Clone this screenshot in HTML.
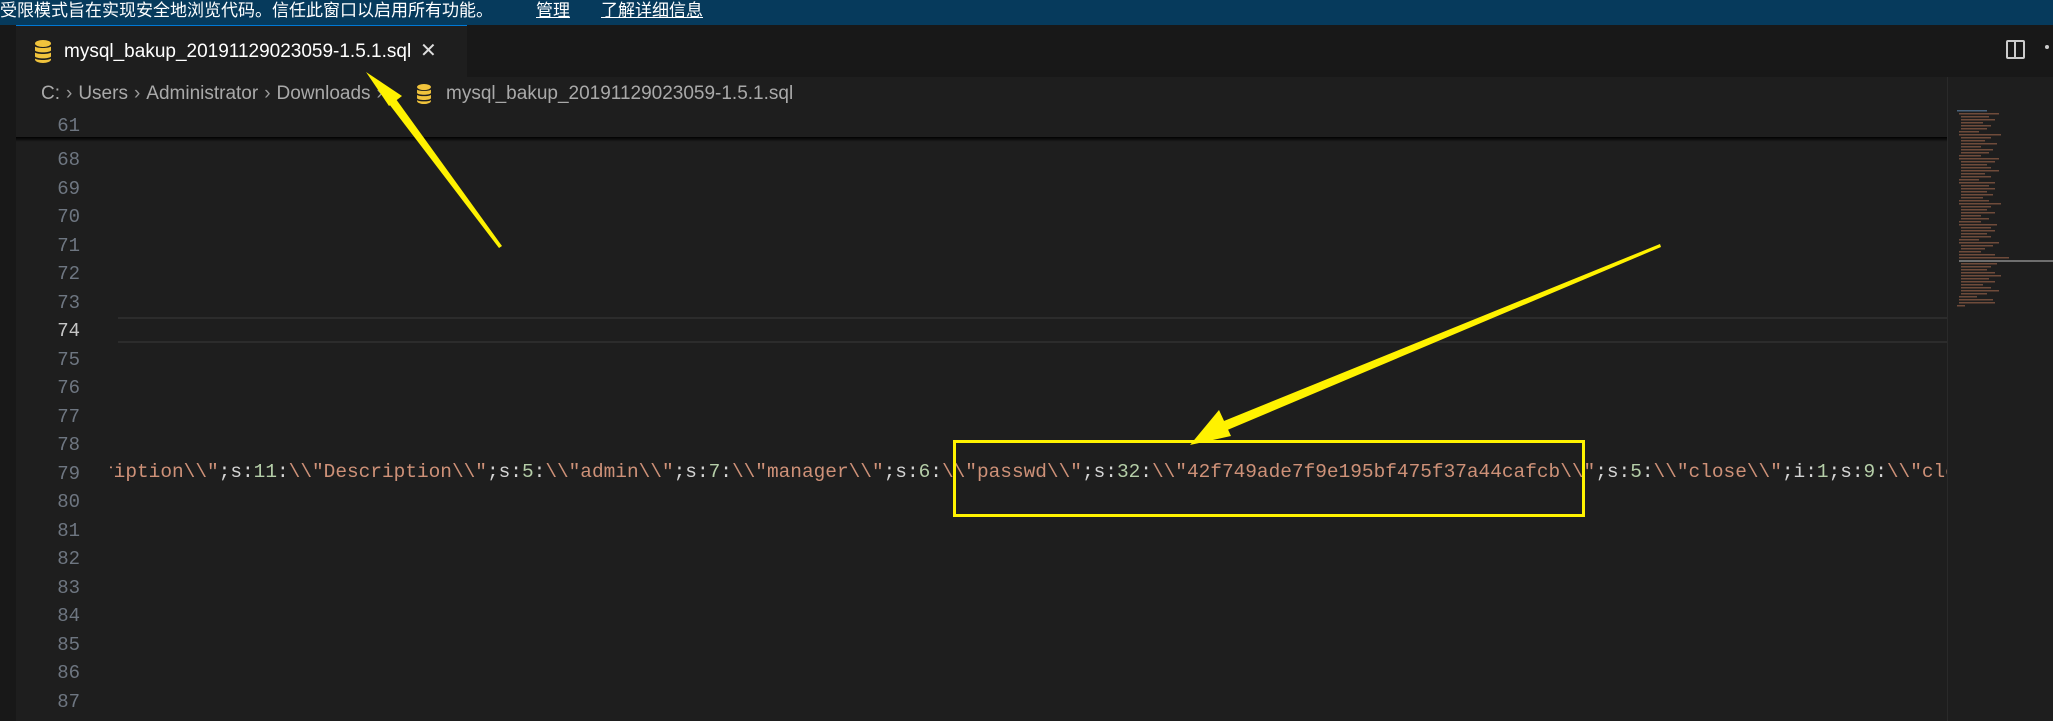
<!DOCTYPE html>
<html><head><meta charset="utf-8"><style>
*{margin:0;padding:0;box-sizing:border-box}
body{width:2053px;height:721px;background:#1e1e1e;position:relative;overflow:hidden;font-family:"Liberation Sans","Noto Sans CJK SC",sans-serif}
.abs{position:absolute}
.ln{position:absolute;left:30px;width:50px;text-align:right;font-family:"Liberation Mono",monospace;font-size:19px;color:#6e7681;line-height:28px}
.code{font-family:"Liberation Mono",monospace;font-size:19.45px;white-space:pre;color:#d4d4d4;letter-spacing:0}
.s{color:#ce9178}.n{color:#b5cea8}
.ch{color:#9a9a9a;margin:0 6px}
</style></head><body>
<div class="abs" style="left:0;top:0;width:2053px;height:25px;background:#063a5c;color:#fff;font-size:17px;line-height:22px;white-space:nowrap">受限模式旨在实现安全地浏览代码。信任此窗口以启用所有功能。<span class="abs" style="left:536px;top:0"><u>管理</u></span><span class="abs" style="left:601px;top:0"><u>了解详细信息</u></span></div>
<div class="abs" style="left:0;top:25px;width:2053px;height:52px;background:#181818"></div>
<div class="abs" style="left:0;top:77px;width:16px;height:644px;background:#181818"></div>
<div class="abs" style="left:16px;top:25px;width:451px;height:52px;background:#1e1e1e;border-top:1px solid #0078d4"></div>
<svg class="abs" style="left:34px;top:40px" width="18" height="23" viewBox="0 0 18 23"><g fill="#f0c33c"><ellipse cx="9" cy="3.5" rx="8" ry="3.5"/><path d="M1 6.5c2 2 14 2 16 0v4c-2 2.5-14 2.5-16 0z"/><path d="M1 12.5c2 2 14 2 16 0v4c-2 2.5-14 2.5-16 0z"/><path d="M1 18.5c2 2 14 2 16 0v1c0 2-4 3.5-8 3.5s-8-1.5-8-3.5z"/></g></svg>
<div class="abs" style="left:64px;top:40px;color:#fff;font-size:19px;line-height:24px;white-space:nowrap">mysql_bakup_20191129023059-1.5.1.sql</div>
<div class="abs" style="left:420px;top:39px;color:#ddd;font-size:20px;line-height:24px">✕</div>
<div class="abs" style="left:2006px;top:40px;width:19px;height:19px;border:2px solid #ccc;border-radius:2px"></div>
<div class="abs" style="left:2014px;top:40px;width:2px;height:19px;background:#ccc"></div>
<div class="abs" style="left:2045px;top:45px;width:4px;height:4px;background:#ccc;border-radius:2px"></div>
<div class="abs" style="left:41px;top:82px;color:#a9a9a9;font-size:19px;line-height:24px;white-space:nowrap">C:<span class="ch">›</span>Users<span class="ch">›</span>Administrator<span class="ch">›</span>Downloads<span class="ch">›</span></div>
<div class="abs" style="left:446px;top:82px;color:#a9a9a9;font-size:19px;line-height:24px;white-space:nowrap">mysql_bakup_20191129023059-1.5.1.sql</div>
<svg class="abs" style="left:416px;top:84px" width="16" height="20" viewBox="0 0 18 23"><g fill="#f0c33c"><ellipse cx="9" cy="3.5" rx="8" ry="3.5"/><path d="M1 6.5c2 2 14 2 16 0v4c-2 2.5-14 2.5-16 0z"/><path d="M1 12.5c2 2 14 2 16 0v4c-2 2.5-14 2.5-16 0z"/><path d="M1 18.5c2 2 14 2 16 0v1c0 2-4 3.5-8 3.5s-8-1.5-8-3.5z"/></g></svg>
<div class="ln" style="top:112px">61</div>
<div class="abs" style="left:16px;top:137px;width:1931px;height:5px;background:linear-gradient(#000,rgba(0,0,0,0))"></div>
<div class="abs" style="left:118px;top:317px;width:1829px;height:2px;background:#2c2c2c"></div>
<div class="abs" style="left:118px;top:341px;width:1829px;height:2px;background:#2c2c2c"></div>
<div class="ln" style="top:146px">68</div><div class="ln" style="top:174.5px">69</div><div class="ln" style="top:203px">70</div><div class="ln" style="top:231.5px">71</div><div class="ln" style="top:260px">72</div><div class="ln" style="top:288.5px">73</div><div class="ln" style="top:317px;color:#c6c6c6">74</div><div class="ln" style="top:345.5px">75</div><div class="ln" style="top:374px">76</div><div class="ln" style="top:402.5px">77</div><div class="ln" style="top:431px">78</div><div class="ln" style="top:459.5px">79</div><div class="ln" style="top:488px">80</div><div class="ln" style="top:516.5px">81</div><div class="ln" style="top:545px">82</div><div class="ln" style="top:573.5px">83</div><div class="ln" style="top:602px">84</div><div class="ln" style="top:630.5px">85</div><div class="ln" style="top:659px">86</div><div class="ln" style="top:687.5px">87</div>
<div class="abs" style="left:110px;top:459px;width:1837px;height:30px;overflow:hidden"><div class="code abs" style="left:-8px;top:2px"><span class="s">ription\\"</span>;s:<span class="n">11</span>:<span class="s">\\"Description\\"</span>;s:<span class="n">5</span>:<span class="s">\\"admin\\"</span>;s:<span class="n">7</span>:<span class="s">\\"manager\\"</span>;s:<span class="n">6</span>:<span class="s">\\"passwd\\"</span>;s:<span class="n">32</span>:<span class="s">\\"42f749ade7f9e195bf475f37a44cafcb\\"</span>;s:<span class="n">5</span>:<span class="s">\\"close\\"</span>;i:<span class="n">1</span>;s:<span class="n">9</span>:<span class="s">\\"close</span></div></div>
<div class="abs" style="left:1947px;top:77px;width:106px;height:644px;background:#1e1e1e;border-left:1px solid #2a2a2a"></div>
<svg class="abs" style="left:1955px;top:108px" width="98" height="210"><g fill="#8a5a44" opacity=".75">
<rect x="2" y="2" width="30" height="1.5" fill="#5a7a9a"/><rect x="4" y="5" width="40" height="1.5"/><rect x="6" y="8" width="28" height="1.5"/><rect x="6" y="11" width="34" height="1.5"/><rect x="6" y="14" width="22" height="1.5"/><rect x="6" y="17" width="30" height="1.5"/><rect x="6" y="20" width="26" height="1.5"/><rect x="4" y="23" width="20" height="1.5"/><rect x="4" y="26" width="42" height="1.5"/><rect x="6" y="29" width="30" height="1.5"/><rect x="6" y="32" width="24" height="1.5"/><rect x="6" y="35" width="36" height="1.5"/><rect x="6" y="38" width="20" height="1.5"/><rect x="6" y="41" width="32" height="1.5"/><rect x="6" y="44" width="28" height="1.5"/><rect x="4" y="47" width="22" height="1.5"/><rect x="4" y="50" width="40" height="1.5"/><rect x="6" y="53" width="34" height="1.5"/><rect x="6" y="56" width="26" height="1.5"/><rect x="6" y="59" width="30" height="1.5"/><rect x="6" y="62" width="38" height="1.5"/><rect x="6" y="65" width="24" height="1.5"/><rect x="6" y="68" width="30" height="1.5"/><rect x="4" y="71" width="20" height="1.5"/><rect x="4" y="74" width="36" height="1.5"/><rect x="6" y="77" width="28" height="1.5"/><rect x="6" y="80" width="34" height="1.5"/><rect x="6" y="83" width="26" height="1.5"/><rect x="6" y="86" width="32" height="1.5"/><rect x="6" y="89" width="22" height="1.5"/><rect x="4" y="92" width="30" height="1.5"/><rect x="4" y="95" width="42" height="1.5"/><rect x="6" y="98" width="30" height="1.5"/><rect x="6" y="101" width="26" height="1.5"/><rect x="6" y="104" width="34" height="1.5"/><rect x="6" y="107" width="20" height="1.5"/><rect x="6" y="110" width="28" height="1.5"/><rect x="4" y="113" width="22" height="1.5"/><rect x="4" y="116" width="38" height="1.5"/><rect x="6" y="119" width="30" height="1.5"/><rect x="6" y="122" width="34" height="1.5"/><rect x="6" y="125" width="26" height="1.5"/><rect x="6" y="128" width="30" height="1.5"/><rect x="4" y="131" width="20" height="1.5"/><rect x="4" y="134" width="40" height="1.5"/><rect x="6" y="137" width="32" height="1.5"/><rect x="6" y="140" width="24" height="1.5"/><rect x="4" y="143" width="22" height="1.5"/><rect x="4" y="146" width="36" height="1.5"/><rect x="4" y="149" width="50" height="1.5"/><rect x="4" y="152" width="96" height="2" fill="#8a8a8a"/><rect x="6" y="155" width="36" height="1.5"/><rect x="6" y="158" width="30" height="1.5"/><rect x="6" y="161" width="26" height="1.5"/><rect x="6" y="164" width="34" height="1.5"/><rect x="6" y="167" width="40" height="1.5"/><rect x="6" y="170" width="28" height="1.5"/><rect x="6" y="173" width="34" height="1.5"/><rect x="6" y="176" width="22" height="1.5"/><rect x="6" y="179" width="30" height="1.5"/><rect x="6" y="182" width="38" height="1.5"/><rect x="6" y="185" width="26" height="1.5"/><rect x="4" y="188" width="18" height="1.5"/><rect x="4" y="191" width="34" height="1.5"/><rect x="4" y="194" width="36" height="1.5"/><rect x="2" y="197" width="8" height="1.5"/>
</g></svg>
<div class="abs" style="left:953px;top:440px;width:632px;height:77px;border:3px solid #fff200"></div>
<svg class="abs" style="left:0;top:0" width="2053" height="721"><g fill="#fff200"><polygon points="502,246 499,248 386,100 393,95"/><polygon points="366,72 402,96 389,106"/><polygon points="1660,244 1661,247 1225,431 1219,423"/><polygon points="1190,445 1219,410 1231,436"/></g></svg>
</body></html>
